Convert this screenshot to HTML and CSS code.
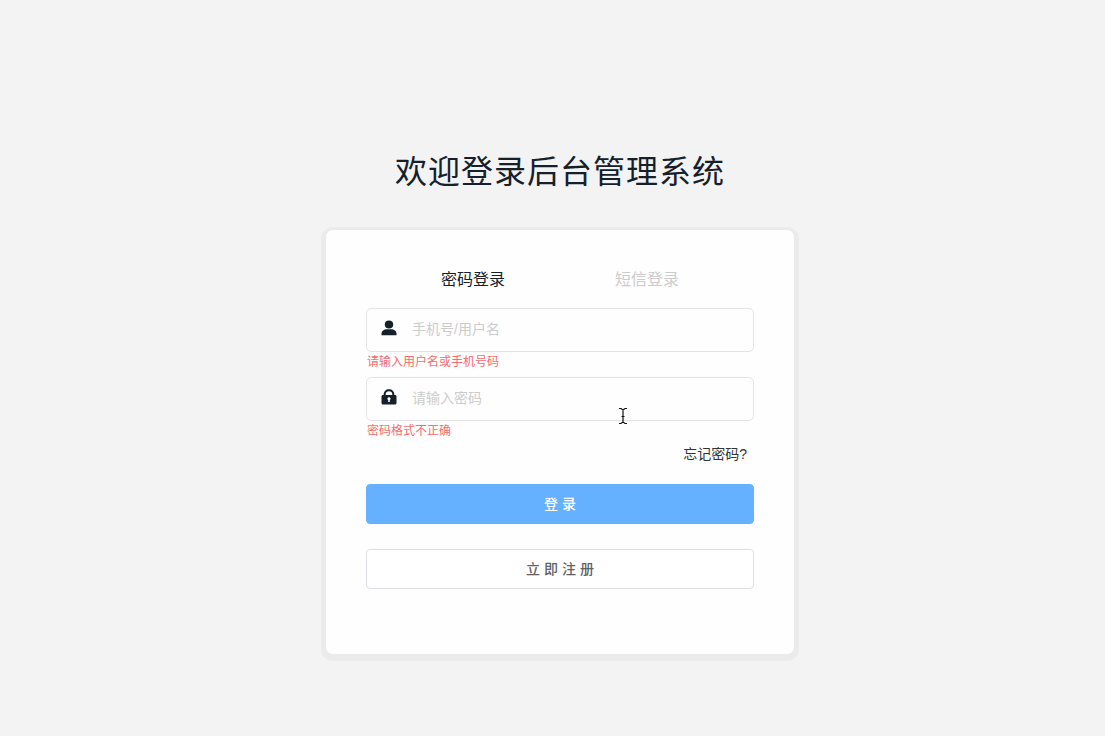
FILE: index.html
```html
<!DOCTYPE html>
<html lang="zh-CN">
<head>
<meta charset="utf-8">
<meta name="viewport" content="width=device-width, initial-scale=1">
<title>欢迎登录后台管理系统</title>
<link rel="stylesheet" href="styles.css">
</head>
<body>
<main class="page">
  <h1 class="title">欢迎登录后台管理系统</h1>
  <form class="card" novalidate>
    <div class="tabs" role="tablist">
      <button class="tab tab-active" type="button" role="tab" aria-selected="true">密码登录</button>
      <button class="tab" type="button" role="tab" aria-selected="false">短信登录</button>
    </div>
    <div class="field">
      <label class="field-icon" for="account" aria-label="手机号/用户名">
        <svg viewBox="0 0 16 16" width="16" height="16" aria-hidden="true"><ellipse cx="8" cy="4.500" rx="4.200" ry="3.900"/><path d="M.5 15.300V13.800C.5 11 3 9.300 6 9.300H10C13 9.300 15.500 11 15.500 13.800V15.300Z"/></svg>
      </label>
      <input class="input" id="account" type="text" placeholder="手机号/用户名" aria-describedby="account-error">
    </div>
    <p class="error" id="account-error">请输入用户名或手机号码</p>
    <div class="field">
      <label class="field-icon" for="password" aria-label="密码">
        <svg viewBox="0 0 16 16" width="16" height="16" aria-hidden="true"><path fill-rule="evenodd" d="M2.700 6V5.300C2.700 2.400 5 .3 8 .3s5.300 2.100 5.300 5V6h.7c.9 0 1.500.6 1.500 1.500v6.500c0 .9-.6 1.500-1.500 1.500H2c-.9 0-1.500-.6-1.500-1.500V7.500C.5 6.600 1.100 6 2 6zm2 0h6.600v-.7c0-1.900-1.400-3.100-3.300-3.100S4.700 3.400 4.700 5.300zM8 8.200a1.500 1.500 0 0 0-.8 2.800v2h1.600v-2A1.500 1.500 0 0 0 8 8.200z"/></svg>
      </label>
      <input class="input" id="password" type="password" placeholder="请输入密码" aria-describedby="password-error">
      <svg class="pointer" viewBox="0 0 10 18" width="10" height="18" aria-hidden="true"><path d="M1 1.500h2L5 3l2-1.500h2M5 3v12M1 16.500h2L5 15l2 1.500h2M3.500 9.500h3"/></svg>
    </div>
    <p class="error" id="password-error">密码格式不正确</p>
    <a class="forgot" href="#forgot">忘记密码?</a>
    <button class="button button-primary" type="submit">登录</button>
    <button class="button" type="button">立即注册</button>
  </form>
</main>
</body>
</html>
```
FILE: styles.css
```css
* {
  box-sizing: border-box;
}

body {
  margin: 0;
  background: #f3f3f3;
  color: #15202b;
  font-family: "Liberation Sans", "Noto Sans CJK SC", sans-serif;
}

button,
input {
  font-family: inherit;
}

.page {
  display: flex;
  flex-direction: column;
  align-items: center;
  min-height: 100vh;
  padding: 148px 0 72px 15px;
}

.title {
  margin: 0 0 33px;
  font-size: 32px;
  line-height: 48px;
  font-weight: 400;
  letter-spacing: 1px;
}

.card {
  display: flex;
  flex-direction: column;
  width: 100%;
  max-width: 470px;
  padding: 38px 40px 65px;
  border: 1px solid #e9eaee;
  border-radius: 8px;
  background: #fefefe;
  box-shadow: 0 2px 0 4px #ebebeb;
}

.tabs {
  display: grid;
  grid-template-columns: 1fr 1fr;
  margin: 0 20px 16px;
}

.tab {
  padding: 0;
  border: 0;
  background: none;
  color: #cccccc;
  font-size: 16px;
  line-height: 24px;
}

.tab-active {
  color: #15202b;
}

.field {
  position: relative;
  display: flex;
  align-items: center;
  height: 44px;
  border: 1px solid #e4e4e4;
  border-radius: 5px;
}

.field-icon {
  display: flex;
  padding: 0 15px 4px 14px;
  fill: #15202b;
}

.input {
  flex: 1;
  min-width: 0;
  height: 40px;
  padding: 0 15px 2px 0;
  border: 0;
  outline: 0;
  background: none;
  color: #15202b;
  font-size: 14px;
}

.input::placeholder {
  color: #cccccc;
}

.pointer {
  position: absolute;
  top: 29px;
  left: 251px;
  fill: none;
  stroke: #111111;
  stroke-width: 1.2;
}

.error {
  margin: 0 0 5px;
  padding-left: 1px;
  color: #f56c6c;
  font-size: 12px;
  line-height: 20px;
}

.forgot {
  align-self: flex-end;
  margin: 0 7px 22px 0;
  color: #333333;
  font-size: 14px;
  line-height: 16px;
  text-decoration: none;
}

.button {
  height: 40px;
  padding: 0 0 2px 4px;
  border: 1px solid #dcdfe6;
  border-radius: 4px;
  background: #ffffff;
  color: #606266;
  font-size: 14px;
  font-weight: 500;
  letter-spacing: 4px;
}

.button-primary {
  margin-bottom: 25px;
  border-color: #66b1ff;
  background: #66b1ff;
  color: #ffffff;
}
```
